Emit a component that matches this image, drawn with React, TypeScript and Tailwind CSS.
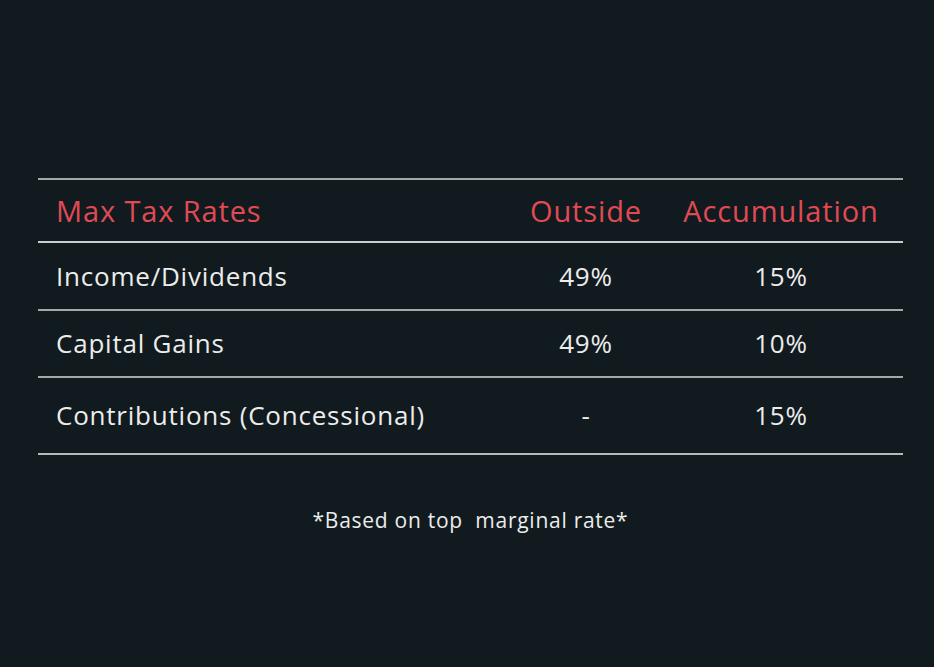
import React from 'react';

const rows = [
  { label: 'Income/Dividends', outside: '49%', accum: '15%', h: 'h-[68px]' },
  { label: 'Capital Gains', outside: '49%', accum: '10%', h: 'h-[67px]' },
  { label: 'Contributions (Concessional)', outside: '-', accum: '15%', h: 'h-[77px]' },
];

export default function App() {
  return (
    <div
      className="w-[934px] h-[667px] bg-[#111a1e] pt-[178px] pl-[38px] pr-[31px]"
      style={{ fontFamily: '"Open Sans", Lato, sans-serif' }}
    >
      <div className="border-t-2 border-[#a3a8a8]">
        {/* header */}
        <div className="grid grid-cols-[1fr_140px_230px] gap-x-[10px] pr-[7px] items-center h-[63px] border-b-2 border-[#c9cccc] text-[29px] tracking-[0.03em] text-[#e04a55]">
          <div className="pl-[18px]">Max Tax Rates</div>
          <div className="text-center">Outside</div>
          <div className="text-center">Accumulation</div>
        </div>

        {rows.map((r, i) => (
          <div
            key={r.label}
            className={`grid grid-cols-[1fr_140px_230px] gap-x-[10px] pr-[7px] items-center ${r.h} border-b-2 ${
              i === rows.length - 1 ? 'border-[#b5b9b9]' : 'border-[#a3a8a8]'
            } text-[26px] tracking-[0.03em] text-[#ececec]`}
          >
            <div className="pl-[18px]">{r.label}</div>
            <div className="text-center">{r.outside}</div>
            <div className="text-center">{r.accum}</div>
          </div>
        ))}
      </div>

      <p className="mt-[50px] text-center text-[21px] tracking-[0.035em] text-[#ececec] whitespace-pre">*Based on top  marginal rate*</p>
    </div>
  );
}
